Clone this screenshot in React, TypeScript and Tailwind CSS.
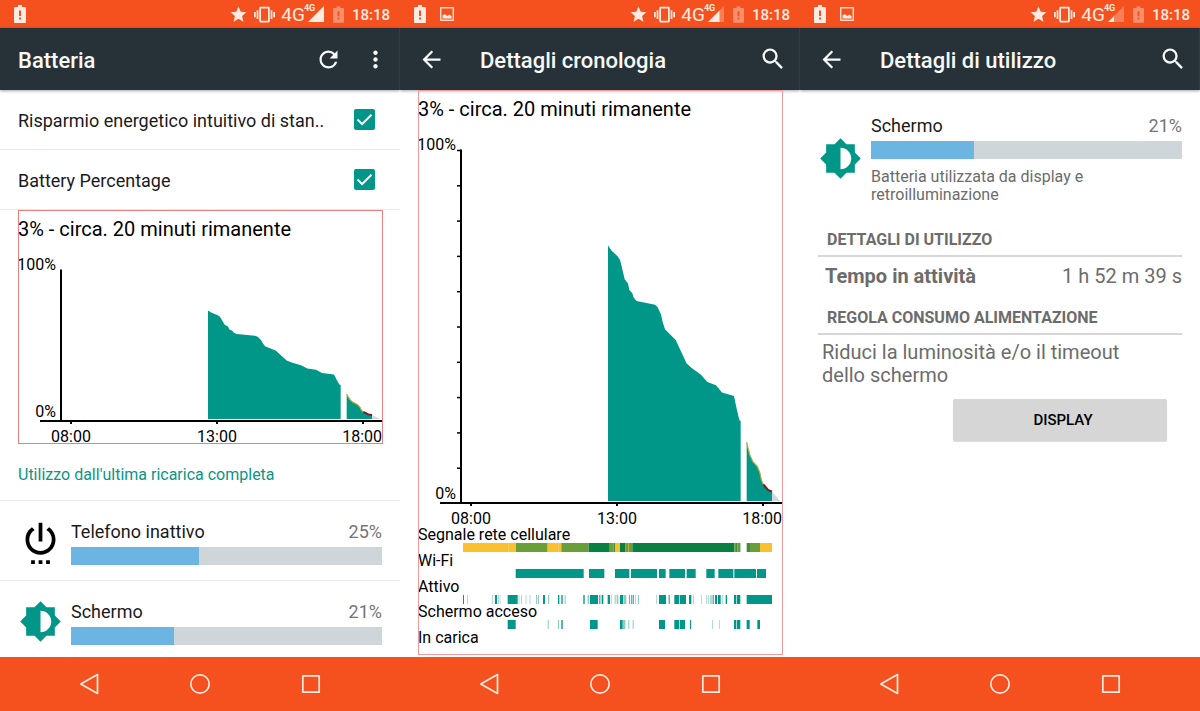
import type { ReactNode } from "react";
import {
  MdArrowBack,
  MdBrightnessMedium,
  MdMoreVert,
  MdRefresh,
  MdSearch,
  MdSettingsPower,
  MdStar,
  MdVibration,
} from "react-icons/md";

type Point = [x: number, level: number];
type Span = [from: number, to: number, color?: string];

/* Horizontal positions are in thirds of a pixel, levels in percent. */
const DISCHARGE: Point[] = [
  [624, 72.8], [635, 71.3], [652, 69.8], [660, 68.7], [667, 66], [674, 63.2],
  [684, 62], [688, 60.1], [697, 59.2], [701, 58], [710, 57], [765, 55.9],
  [773, 55.2], [783, 53.1], [788, 51], [795, 48.9], [827, 45.9], [860, 39.2],
  [875, 37.9], [903, 36], [922, 33.9], [948, 33], [966, 30.9], [1002, 29.9],
  [1010, 26.3], [1018, 23.1], [1022, 22.8],
];
const LOW: Point[] = [
  [1040, 16.8], [1044, 15.1], [1050, 13], [1058, 11.3], [1072, 9.8],
  [1080, 7.9], [1084, 6], [1090, 4.7],
];
const CRITICAL: Point[] = [[1090, 4.7], [1105, 3.1], [1116, 2.7]];
const PROJECTED: Point[] = [[1116, 2.7], [1140, 0]];

const TEAL = "#009688";
const PALE = "#8ccbc4";
const AMBER = "#fbc02d";
const OLIVE = "#d3ab2c";
const LIME = "#689f38";
const MOSS = "#448c3c";
const GREEN = "#0a7f42";

const SIGNAL: Span[] = [
  [189, 322, AMBER], [322, 325, OLIVE], [325, 348, AMBER], [348, 443, LIME],
  [443, 472, AMBER], [472, 475, OLIVE], [475, 484, AMBER], [484, 566, LIME],
  [566, 627, GREEN], [627, 641, LIME], [641, 645, MOSS], [645, 660, AMBER],
  [660, 676, GREEN], [676, 684, LIME], [684, 687, OLIVE], [687, 697, LIME],
  [697, 1003, GREEN], [1003, 1008, LIME], [1008, 1012, MOSS], [1012, 1018, LIME],
  [1018, 1021, GREEN], [1040, 1050, MOSS], [1050, 1080, LIME], [1080, 1116, AMBER],
];
const WIFI: Span[] = [
  [347, 551], [567, 613], [645, 688], [693, 771], [777, 797], [808, 855],
  [860, 887], [919, 944], [955, 1000], [1003, 1068], [1071, 1098],
];
const AWAKE: Span[] = [
  [189, 192], [201, 203, PALE], [277, 279, PALE], [285, 291], [295, 297, PALE],
  [299, 301, PALE], [323, 353], [356, 358, PALE], [364, 366, PALE],
  [377, 379, PALE], [389, 391, PALE], [408, 411, PALE], [414, 417, PALE],
  [429, 435], [444, 447, PALE], [474, 478], [484, 488], [494, 497, PALE],
  [550, 554], [563, 567, PALE], [570, 594], [598, 601], [605, 610],
  [623, 630], [634, 636, PALE], [644, 647, PALE], [650, 655, PALE], [660, 670],
  [672, 679, PALE], [687, 689], [693, 695], [698, 701], [706, 708, PALE],
  [714, 717, PALE], [769, 771, PALE], [777, 798], [806, 809], [823, 837],
  [839, 858], [867, 874], [879, 881, PALE], [903, 905, PALE], [918, 920, PALE],
  [924, 926, PALE], [930, 932, PALE], [935, 937], [940, 942], [945, 951],
  [954, 962], [966, 968, PALE], [977, 981], [1002, 1008], [1010, 1021],
  [1040, 1116],
];
const SCREEN_ON: Span[] = [
  [323, 347], [443, 446, PALE], [474, 477, PALE], [484, 488], [570, 593],
  [660, 668], [669, 676, PALE], [685, 688, PALE], [698, 701, PALE],
  [777, 795], [823, 837], [839, 855], [870, 873], [937, 939, PALE],
  [957, 959, PALE], [1002, 1008], [1010, 1021], [1040, 1049], [1072, 1080],
];
const HISTORY: { label: string; spans: Span[] }[] = [
  { label: "Segnale rete cellulare", spans: SIGNAL },
  { label: "Wi-Fi", spans: WIFI },
  { label: "Attivo", spans: AWAKE },
  { label: "Schermo acceso", spans: SCREEN_ON },
  { label: "In carica", spans: [] },
];

function BatteryGlyph({ className }: { className: string }) {
  return (
    <svg viewBox="0 0 12 18" className={className} fill="currentColor" aria-hidden="true">
      <path
        fillRule="evenodd"
        d="M4 0h4v2h3a1 1 0 0 1 1 1v14a1 1 0 0 1-1 1H1a1 1 0 0 1-1-1V3a1 1 0 0 1 1-1h3zM5 5.500v5.500h2V5.500zM5 12.500v2h2v-2z"
      />
    </svg>
  );
}

function PictureGlyph() {
  return (
    <svg viewBox="0 0 14 14" className="size-3.5" aria-hidden="true">
      <rect x="0.75" y="0.75" width="12.500" height="12.500" fill="none" stroke="currentColor" strokeWidth="1.300" />
      <path d="M2.500 11.500V8.500l2-1.500 2.500 2 2.500-1.500 2 1.800v2.200z" fill="currentColor" />
    </svg>
  );
}

function StatusBar({ picture, signal }: { picture?: boolean; signal: number }) {
  const edge = 16 * signal;
  return (
    <div className="flex h-7 items-center bg-[#f4511e] pr-2.5 pl-3.5 text-[#fdebe2]">
      <BatteryGlyph className="h-[18px] w-3" />
      {picture && (
        <span className="ml-3.5">
          <PictureGlyph />
        </span>
      )}
      <div className="ml-auto flex items-center">
        <MdStar className="size-[19px]" />
        <MdVibration className="ml-1.5 size-[21px]" />
        <span className="ml-1.5 pt-px font-['Liberation_Sans_Narrow','Roboto',sans-serif] text-[19px] leading-[27px]">4G</span>
        <span className="relative ml-[3px] flex">
          <svg viewBox="0 0 16 16" className="size-4" fill="currentColor" aria-hidden="true">
            <path d="M0 16 16 0V16z" opacity="0.3" />
            <path d={`M0 16 ${edge} ${16 - edge}V16z`} />
          </svg>
          <span className="absolute -top-0.5 -left-1 text-[9px] leading-[9px] font-bold">4G</span>
        </span>
        <BatteryGlyph className="ml-[9px] h-[17px] w-[11px] opacity-40" />
        <span className="ml-2 pt-px text-[15px] leading-7 font-medium">18:18</span>
      </div>
    </div>
  );
}

function NavBar() {
  const button = "flex items-center justify-center";
  return (
    <nav className="mt-auto grid h-[54px] shrink-0 grid-cols-3 bg-[#f4511e] px-[33px] text-[#fdebe2]">
      <button type="button" aria-label="Indietro" className={button}>
        <svg viewBox="0 0 22 22" className="size-[22px]" fill="none" stroke="currentColor" strokeWidth="1.700" strokeLinejoin="round">
          <path d="M19.500 1.500v19L2.800 11z" />
        </svg>
      </button>
      <button type="button" aria-label="Home" className={button}>
        <svg viewBox="0 0 22 22" className="size-[22px]" fill="none" stroke="currentColor" strokeWidth="1.700">
          <circle cx="11" cy="11" r="9.200" />
        </svg>
      </button>
      <button type="button" aria-label="Recenti" className={button}>
        <svg viewBox="0 0 22 22" className="size-[22px]" fill="none" stroke="currentColor" strokeWidth="1.700" strokeLinejoin="round">
          <rect x="2.800" y="2.800" width="16.400" height="16.400" />
        </svg>
      </button>
    </nav>
  );
}

function Phone({ status, toolbar, children }: { status: ReactNode; toolbar: ReactNode; children: ReactNode }) {
  return (
    <section className="flex min-h-screen min-w-0 flex-col overflow-hidden bg-white">
      {status}
      <header className="flex h-[62px] shrink-0 items-center bg-[#263238] text-[#f7f9fa] shadow-[inset_-1px_0_0_#323e44,0_1px_3px_rgba(0,0,0,0.35)]">
        {toolbar}
      </header>
      {children}
      <NavBar />
    </section>
  );
}

function DetailToolbar({ title }: { title: string }) {
  return (
    <>
      <button type="button" aria-label="Indietro" className="ml-[18px]">
        <MdArrowBack className="size-[27px]" />
      </button>
      <h1 className="ml-[35px] pt-1 text-[22px] leading-7 font-medium">{title}</h1>
      <button type="button" aria-label="Cerca" className="mr-[13px] ml-auto">
        <MdSearch className="size-7" />
      </button>
    </>
  );
}

function CheckRow({ id, label }: { id: string; label: string }) {
  return (
    <div className="flex h-[60px] items-center justify-between border-b border-[#e8e8e8] pr-[25px] pl-[18px]">
      <label htmlFor={id} className="pt-0.5 text-lg leading-6">
        {label}
      </label>
      <span className="relative flex text-white">
        <input id={id} type="checkbox" defaultChecked className="peer size-[21px] appearance-none rounded-xs border-2 border-[#757575] checked:border-0 checked:bg-[#009688]" />
        <svg viewBox="0 0 21 21" className="pointer-events-none invisible absolute inset-0 size-[21px] peer-checked:visible" fill="none" stroke="currentColor" strokeWidth="2" aria-hidden="true">
          <path d="m3.500 10.500 4.600 4.600 9.400-9.400" />
        </svg>
      </span>
    </div>
  );
}

function BatteryPlot({ height, ticks }: { height: number; ticks?: boolean }) {
  const top = 20;
  const axis = top + height;
  const base = axis - 2;
  const px = (x: number) => x / 3;
  const py = (level: number) => base - (level / 100) * (height - 2);
  const line = (points: Point[]) => "M" + points.map(([x, l]) => `${px(x)} ${py(l)}`).join("L");
  const area = (points: Point[]) => `${line(points)}V${base}H${px(points[0][0])}z`;
  return (
    <svg viewBox={`18 0 365 ${axis + 23}`} className="block w-full overflow-visible font-['Roboto',sans-serif] text-base" role="img" aria-label="Livello batteria">
      <path d={area(PROJECTED)} fill="#cfd8dc" />
      <path d={area(DISCHARGE)} fill={TEAL} />
      <path d={area([...LOW, ...CRITICAL])} fill={TEAL} />
      <path d={line(LOW)} fill="none" stroke="#b9a83c" strokeWidth="1.200" />
      <path d={line(CRITICAL)} fill="none" stroke="#7d1f22" strokeWidth="2" />
      <g stroke="#000" strokeWidth="2">
        <path d={`M61 ${top - 0.5}V${axis}`} />
        <path d={`M40 ${axis}H382`} />
        <path d={`M71 ${axis}v3M217 ${axis}v3M363 ${axis}v3`} />
        {ticks &&
          Array.from({ length: 10 }, (_, i) => (
            <path key={i} d={`M57 ${top + 0.5 + (i * height) / 10}h4`} strokeWidth="1.500" />
          ))}
      </g>
      <g fill="#000">
        <text x="56" y={top} textAnchor="end">100%</text>
        <text x="56" y={axis - 4} textAnchor="end">0%</text>
        <text x="71" y={axis + 21} textAnchor="middle">08:00</text>
        <text x="217" y={axis + 21} textAnchor="middle">13:00</text>
        <text x="382" y={axis + 21} textAnchor="end">18:00</text>
      </g>
    </svg>
  );
}

function ChartTitle() {
  return <h2 className="h-10 text-xl leading-[38px] text-black">3% - circa. 20 minuti rimanente</h2>;
}

function Usage({ icon, name, percent, fill, children }: { icon: ReactNode; name: string; percent: string; fill: string; children?: ReactNode }) {
  return (
    <div className="flex items-center pr-[18px] pl-[9px]">
      <div className="flex h-11 w-[62px] shrink-0 items-center justify-center pb-0.5">{icon}</div>
      <div className="min-w-0 flex-1">
        <div className="flex justify-between text-lg leading-6">
          <span>{name}</span>
          <span className="text-[#757575]">{percent}</span>
        </div>
        <div className="mt-[3px] h-[18px] bg-[#cfd6da]">
          <div className="h-full bg-[#6cb4e2]" style={{ width: fill }} />
        </div>
        {children}
      </div>
    </div>
  );
}

function SectionTitle({ children }: { children: ReactNode }) {
  return (
    <h2 className="border-b-2 border-[#d6d6d6] pb-[3px] pl-[9px] text-base leading-6 font-bold text-[#6c6c6c]">
      {children}
    </h2>
  );
}

export default function App() {
  return (
    <main className="grid grid-cols-3 bg-white font-['Roboto',sans-serif] text-[#1a1a1a]">
      <Phone
        status={<StatusBar signal={1} />}
        toolbar={
          <>
            <h1 className="pt-1 pl-[18px] text-[22px] leading-7 font-medium">Batteria</h1>
            <button type="button" aria-label="Aggiorna" className="ml-auto">
              <MdRefresh className="size-[27px]" />
            </button>
            <button type="button" aria-label="Altro" className="mr-[11px] ml-5">
              <MdMoreVert className="size-[27px]" />
            </button>
          </>
        }
      >
        <CheckRow id="standby" label="Risparmio energetico intuitivo di stan.." />
        <CheckRow id="percentage" label="Battery Percentage" />
        <div className="mr-[17px] ml-[18px] outline-1 -outline-offset-1 outline-[#ea7f80]">
          <ChartTitle />
          <BatteryPlot height={151} />
        </div>
        <h2 className="border-b border-[#e8e8e8] pt-[19px] pb-[13px] pl-[18px] text-base leading-6 text-[#0b9585]">
          Utilizzo dall'ultima ricarica completa
        </h2>
        <div className="border-b border-[#e8e8e8] pt-[19px] pb-[15px]">
          <Usage icon={<MdSettingsPower className="size-[45px] shrink-0 text-black" />} name="Telefono inattivo" percent="25%" fill="41%" />
        </div>
        <div className="pt-[19px]">
          <Usage icon={<MdBrightnessMedium className="size-[43px] shrink-0 text-[#009688]" />} name="Schermo" percent="21%" fill="33%" />
        </div>
      </Phone>

      <Phone status={<StatusBar picture signal={0.72} />} toolbar={<DetailToolbar title="Dettagli cronologia" />}>
        <div className="mr-[17px] mb-0.5 ml-[18px] flex flex-1 flex-col outline-1 -outline-offset-1 outline-[#ef9a9a]">
          <ChartTitle />
          <BatteryPlot height={353} ticks />
          <div className="flex flex-1 flex-col">
            {HISTORY.map(({ label, spans }) => (
              <div key={label} className="min-h-[25px] flex-1 text-base leading-[17px] text-black">
                <div>{label}</div>
                {spans.length > 0 && (
                  <svg viewBox="54 0 1095 9" preserveAspectRatio="none" className="block h-[9px] w-full" aria-hidden="true">
                    {spans.map(([from, to, color]) => (
                      <rect key={from} x={from} y="0" width={to - from} height="9" fill={color ?? TEAL} />
                    ))}
                  </svg>
                )}
              </div>
            ))}
          </div>
        </div>
      </Phone>

      <Phone status={<StatusBar picture signal={0.38} />} toolbar={<DetailToolbar title="Dettagli di utilizzo" />}>
        <div className="pt-6">
          <Usage icon={<MdBrightnessMedium className="size-[43px] shrink-0 text-[#009688]" />} name="Schermo" percent="21%" fill="33%">
            <p className="mt-[9px] text-base leading-[18px] text-[#6c6c6c]">
              Batteria utilizzata da display e
              <br />
              retroilluminazione
            </p>
          </Usage>
        </div>
        <div className="px-[18px] pt-6 text-[#6c6c6c]">
          <SectionTitle>DETTAGLI DI UTILIZZO</SectionTitle>
          <div className="flex justify-between pt-[7px] pb-[18px] pl-[7px] text-xl leading-6">
            <span className="font-bold">Tempo in attività</span>
            <span>1 h 52 m 39 s</span>
          </div>
          <SectionTitle>REGOLA CONSUMO ALIMENTAZIONE</SectionTitle>
          <p className="pt-1.5 pl-1 text-xl leading-[23px]">
            Riduci la luminosità e/o il timeout
            <br />
            dello schermo
          </p>
          <div className="flex justify-end pt-3 pr-[15px]">
            <button type="button" className="h-[42px] w-[214px] rounded-xs bg-[#d6d6d6] pl-1.5 text-[15px] font-medium text-black shadow-[0_1px_1px_rgba(0,0,0,0.15)]">
              DISPLAY
            </button>
          </div>
        </div>
      </Phone>
    </main>
  );
}
